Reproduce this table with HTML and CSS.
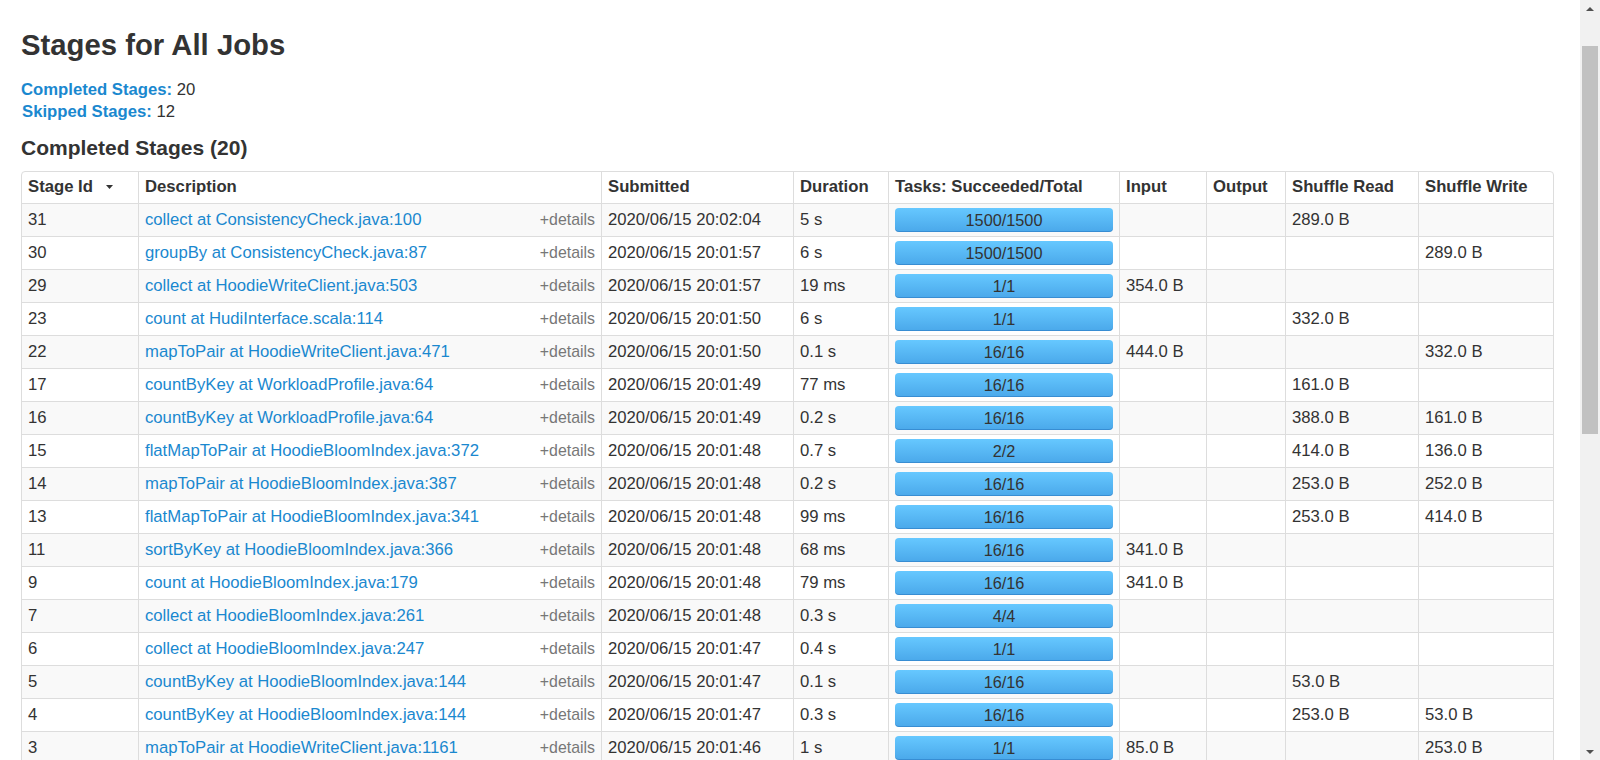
FILE: index.html
```html
<!DOCTYPE html>
<html lang="en">
<head>
<meta charset="utf-8">
<title>Stages for All Jobs</title>
<link rel="stylesheet" href="styles.css">
</head>
<body>
<div class="page">
  <div class="main">
    <h3 class="title">Stages for All Jobs</h3>
    <ul class="summary">
      <li><a href="#completed"><strong>Completed Stages:</strong></a> 20</li>
      <li class="skipped"><a href="#skipped"><strong>Skipped Stages:</strong></a> 12</li>
    </ul>
    <h4 class="section" id="completed">Completed Stages (20)</h4>
    <table class="stages">
      <thead>
        <tr>
          <th class="c-id">Stage Id <svg class="sort" width="7" height="4" viewBox="0 0 7 4"><path d="M0 0H7L3.5 4Z" fill="#333"/></svg></th>
          <th class="c-desc">Description</th>
          <th class="c-sub">Submitted</th>
          <th class="c-dur">Duration</th>
          <th class="c-tasks">Tasks: Succeeded/Total</th>
          <th class="c-in">Input</th>
          <th class="c-out">Output</th>
          <th class="c-sr">Shuffle Read</th>
          <th class="c-sw">Shuffle Write</th>
        </tr>
      </thead>
      <tbody>
        <tr><td>31</td><td><div class="desc"><a href="#">collect at ConsistencyCheck.java:100</a><span class="details">+details</span></div></td><td>2020/06/15 20:02:04</td><td>5 s</td><td><div class="bar">1500/1500</div></td><td></td><td></td><td>289.0 B</td><td></td></tr>
        <tr><td>30</td><td><div class="desc"><a href="#">groupBy at ConsistencyCheck.java:87</a><span class="details">+details</span></div></td><td>2020/06/15 20:01:57</td><td>6 s</td><td><div class="bar">1500/1500</div></td><td></td><td></td><td></td><td>289.0 B</td></tr>
        <tr><td>29</td><td><div class="desc"><a href="#">collect at HoodieWriteClient.java:503</a><span class="details">+details</span></div></td><td>2020/06/15 20:01:57</td><td>19 ms</td><td><div class="bar">1/1</div></td><td>354.0 B</td><td></td><td></td><td></td></tr>
        <tr><td>23</td><td><div class="desc"><a href="#">count at HudiInterface.scala:114</a><span class="details">+details</span></div></td><td>2020/06/15 20:01:50</td><td>6 s</td><td><div class="bar">1/1</div></td><td></td><td></td><td>332.0 B</td><td></td></tr>
        <tr><td>22</td><td><div class="desc"><a href="#">mapToPair at HoodieWriteClient.java:471</a><span class="details">+details</span></div></td><td>2020/06/15 20:01:50</td><td>0.1 s</td><td><div class="bar">16/16</div></td><td>444.0 B</td><td></td><td></td><td>332.0 B</td></tr>
        <tr><td>17</td><td><div class="desc"><a href="#">countByKey at WorkloadProfile.java:64</a><span class="details">+details</span></div></td><td>2020/06/15 20:01:49</td><td>77 ms</td><td><div class="bar">16/16</div></td><td></td><td></td><td>161.0 B</td><td></td></tr>
        <tr><td>16</td><td><div class="desc"><a href="#">countByKey at WorkloadProfile.java:64</a><span class="details">+details</span></div></td><td>2020/06/15 20:01:49</td><td>0.2 s</td><td><div class="bar">16/16</div></td><td></td><td></td><td>388.0 B</td><td>161.0 B</td></tr>
        <tr><td>15</td><td><div class="desc"><a href="#">flatMapToPair at HoodieBloomIndex.java:372</a><span class="details">+details</span></div></td><td>2020/06/15 20:01:48</td><td>0.7 s</td><td><div class="bar">2/2</div></td><td></td><td></td><td>414.0 B</td><td>136.0 B</td></tr>
        <tr><td>14</td><td><div class="desc"><a href="#">mapToPair at HoodieBloomIndex.java:387</a><span class="details">+details</span></div></td><td>2020/06/15 20:01:48</td><td>0.2 s</td><td><div class="bar">16/16</div></td><td></td><td></td><td>253.0 B</td><td>252.0 B</td></tr>
        <tr><td>13</td><td><div class="desc"><a href="#">flatMapToPair at HoodieBloomIndex.java:341</a><span class="details">+details</span></div></td><td>2020/06/15 20:01:48</td><td>99 ms</td><td><div class="bar">16/16</div></td><td></td><td></td><td>253.0 B</td><td>414.0 B</td></tr>
        <tr><td>11</td><td><div class="desc"><a href="#">sortByKey at HoodieBloomIndex.java:366</a><span class="details">+details</span></div></td><td>2020/06/15 20:01:48</td><td>68 ms</td><td><div class="bar">16/16</div></td><td>341.0 B</td><td></td><td></td><td></td></tr>
        <tr><td>9</td><td><div class="desc"><a href="#">count at HoodieBloomIndex.java:179</a><span class="details">+details</span></div></td><td>2020/06/15 20:01:48</td><td>79 ms</td><td><div class="bar">16/16</div></td><td>341.0 B</td><td></td><td></td><td></td></tr>
        <tr><td>7</td><td><div class="desc"><a href="#">collect at HoodieBloomIndex.java:261</a><span class="details">+details</span></div></td><td>2020/06/15 20:01:48</td><td>0.3 s</td><td><div class="bar">4/4</div></td><td></td><td></td><td></td><td></td></tr>
        <tr><td>6</td><td><div class="desc"><a href="#">collect at HoodieBloomIndex.java:247</a><span class="details">+details</span></div></td><td>2020/06/15 20:01:47</td><td>0.4 s</td><td><div class="bar">1/1</div></td><td></td><td></td><td></td><td></td></tr>
        <tr><td>5</td><td><div class="desc"><a href="#">countByKey at HoodieBloomIndex.java:144</a><span class="details">+details</span></div></td><td>2020/06/15 20:01:47</td><td>0.1 s</td><td><div class="bar">16/16</div></td><td></td><td></td><td>53.0 B</td><td></td></tr>
        <tr><td>4</td><td><div class="desc"><a href="#">countByKey at HoodieBloomIndex.java:144</a><span class="details">+details</span></div></td><td>2020/06/15 20:01:47</td><td>0.3 s</td><td><div class="bar">16/16</div></td><td></td><td></td><td>253.0 B</td><td>53.0 B</td></tr>
        <tr><td>3</td><td><div class="desc"><a href="#">mapToPair at HoodieWriteClient.java:1161</a><span class="details">+details</span></div></td><td>2020/06/15 20:01:46</td><td>1 s</td><td><div class="bar">1/1</div></td><td>85.0 B</td><td></td><td></td><td>253.0 B</td></tr>
      </tbody>
    </table>
  </div>
  <div class="scrollbar">
    <div class="sb-btn"><svg width="8" height="4" viewBox="0 0 8 4"><path d="M0 4L4 0L8 4Z" fill="#505050"/></svg></div>
    <div class="sb-track"><div class="sb-thumb"></div></div>
    <div class="sb-btn"><svg width="8" height="4" viewBox="0 0 8 4"><path d="M0 0L8 0L4 4Z" fill="#505050"/></svg></div>
  </div>
</div>
</body>
</html>
```

FILE: styles.css
```css
* {
  box-sizing: border-box;
}

html,
body {
  margin: 0;
  padding: 0;
  height: 100%;
}

body {
  font-family: "Liberation Sans", Arial, Helvetica, sans-serif;
  color: #333;
  background: #fff;
  overflow: hidden;
}

.page {
  display: flex;
  height: 760px;
}

.main {
  flex: 1;
  min-width: 0;
  padding: 27px 0 0 21px;
  overflow: hidden;
}

.title {
  margin: 0;
  font-size: 29.3px;
  line-height: 36px;
  font-weight: bold;
}

.summary {
  list-style: none;
  margin: 15.7px 0 0;
  padding: 0;
  font-size: 16.7px;
  line-height: 22.4px;
}

.summary a {
  color: #1a88cf;
  text-decoration: none;
}

.summary .skipped {
  padding-left: 1px;
}

.section {
  margin: 12.4px 0 0;
  font-size: 21px;
  line-height: 24px;
  font-weight: bold;
}

.stages {
  margin-top: 11.2px;
  width: 1533px;
  table-layout: fixed;
  border-collapse: separate;
  border-spacing: 0;
  border: 1px solid #ddd;
  border-radius: 4px;
  font-size: 16.7px;
  line-height: 24px;
}

.stages th,
.stages td {
  text-align: left;
  vertical-align: top;
  white-space: nowrap;
  overflow: hidden;
  border-left: 1px solid #ddd;
}

.stages th:first-child,
.stages td:first-child {
  border-left: 0;
}

.stages th {
  padding: 3px 6px 4px;
  font-size: 16.7px;
  font-weight: bold;
}

.stages td {
  padding: 4px 6px;
  border-top: 1px solid #ddd;
}

.stages tbody tr:nth-child(odd) td {
  background: #f9f9f9;
}

.c-id { width: 116px; }
.c-desc { width: 463px; }
.c-sub { width: 192px; }
.c-dur { width: 95px; }
.c-tasks { width: 231px; }
.c-in { width: 87px; }
.c-out { width: 79px; }
.c-sr { width: 133px; }
.c-sw { width: 135px; }

.sort {
  margin-left: 8px;
  vertical-align: 3px;
}

.desc {
  display: flex;
  justify-content: space-between;
  align-items: baseline;
}

.desc a {
  color: #1a88cf;
  text-decoration: none;
}

.details {
  color: #777;
  font-size: 15.9px;
}

.bar {
  height: 24px;
  border-radius: 4px;
  background: linear-gradient(to bottom, #66c8ff 0%, #4aa8ea 100%);
  box-shadow: inset 0 -1px 0 rgba(0, 60, 140, 0.25);
  text-align: center;
  font-size: 16.3px;
  line-height: 24px;
  color: #333;
}

.scrollbar {
  flex: none;
  width: 20px;
  height: 760px;
  background: #f1f1f1;
  display: flex;
  flex-direction: column;
}

.sb-btn {
  flex: none;
  height: 17px;
  display: flex;
  align-items: center;
  justify-content: center;
}

.sb-track {
  flex: 1;
  padding: 29px 2px 0;
}

.sb-thumb {
  height: 388px;
  background: #c1c1c1;
}
```
